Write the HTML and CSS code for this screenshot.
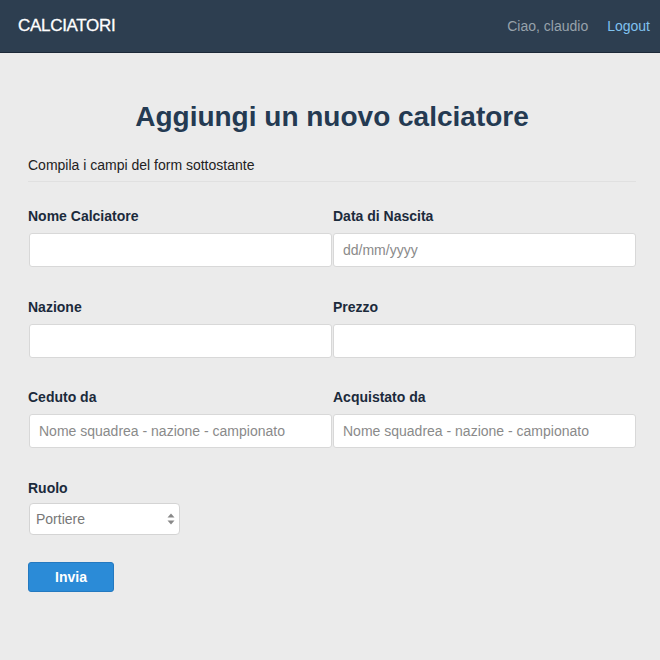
FILE: index.html
```html
<!DOCTYPE html>
<html lang="it">
<head>
<meta charset="utf-8">
<title>Calciatori</title>
<link rel="stylesheet" href="styles.css">
</head>
<body>
<nav class="navbar">
  <a class="brand" href="#">CALCIATORI</a>
  <div class="nav-right">
    <span class="greet">Ciao, claudio</span>
    <a class="logout" href="#">Logout</a>
  </div>
</nav>
<main class="container">
  <h1 class="title">Aggiungi un nuovo calciatore</h1>
  <p class="subtitle">Compila i campi del form sottostante</p>
  <form class="form">
    <div class="grid">
      <div class="field">
        <label>Nome Calciatore</label>
        <input type="text" class="input">
      </div>
      <div class="field">
        <label>Data di Nascita</label>
        <input type="text" class="input" placeholder="dd/mm/yyyy">
      </div>
      <div class="field">
        <label>Nazione</label>
        <input type="text" class="input">
      </div>
      <div class="field">
        <label>Prezzo</label>
        <input type="text" class="input">
      </div>
      <div class="field">
        <label>Ceduto da</label>
        <input type="text" class="input" placeholder="Nome squadrea - nazione - campionato">
      </div>
      <div class="field">
        <label>Acquistato da</label>
        <input type="text" class="input" placeholder="Nome squadrea - nazione - campionato">
      </div>
      <div class="field">
        <label>Ruolo</label>
        <div class="select-wrap">
          <select class="select">
            <option>Portiere</option>
          </select>
          <svg class="arrows" width="8" height="12" viewBox="0 0 8 12"><path d="M4 0.5 L7.5 4.5 L0.5 4.5 Z M4 11.5 L7.5 7.5 L0.5 7.5 Z" fill="#888"/></svg>
        </div>
      </div>
    </div>
    <button type="button" class="btn">Invia</button>
  </form>
</main>
</body>
</html>
```
FILE: styles.css
```css
html, body {
  margin: 0;
  padding: 0;
}
body {
  background: #ebebeb;
  font-family: "Liberation Sans", Arial, Helvetica, sans-serif;
  font-size: 14px;
  color: #333;
  min-height: 660px;
}
.navbar {
  height: 52px;
  background: #2d3e50;
  border-bottom: 1px solid #1c2938;
  display: flex;
  align-items: center;
  justify-content: space-between;
  padding: 0 10px 0 18px;
}
.brand {
  color: #fff;
  font-size: 17px;
  text-decoration: none;
  letter-spacing: -0.3px;
  -webkit-text-stroke: 0.3px #fff;
}
.nav-right {
  display: flex;
  gap: 19px;
  font-size: 14px;
}
.greet {
  color: #97a2ab;
}
.logout {
  color: #80c2ef;
  text-decoration: none;
}
.container {
  margin: 0 24px 0 28px;
  padding-top: 47px;
}
.title {
  margin: 0;
  text-align: center;
  font-size: 28px;
  line-height: 34px;
  font-weight: bold;
  color: #243a52;
}
.subtitle {
  margin: 21px 0 0;
  line-height: 20px;
  padding-bottom: 6px;
  border-bottom: 1px solid #e0e0e0;
  color: #222;
}
.form {
  padding-top: 24px;
}
.grid {
  display: grid;
  grid-template-columns: 1fr 1fr;
  row-gap: 29.5px;
}
.field {
  display: flex;
  flex-direction: column;
}
.field label {
  font-weight: bold;
  color: #1b2a3b;
  line-height: 20px;
  margin-bottom: 7px;
}
.field:nth-child(2n) label {
  padding-left: 1px;
}
.input {
  box-sizing: border-box;
  margin-left: 1px;
  width: 303px;
  height: 34px;
  border: 1px solid #d8d8d8;
  border-radius: 3px;
  background: #fff;
  padding: 0 9px;
  font-family: inherit;
  font-size: 14px;
  color: #333;
  outline: none;
}
.input::placeholder {
  color: #8a8a8a;
}
.select-wrap {
  position: relative;
  width: 151px;
  margin-left: 1px;
  margin-top: -2px;
}
.select {
  box-sizing: border-box;
  width: 151px;
  height: 32px;
  border: 1px solid #d4d4d4;
  border-radius: 4px;
  background: #fff;
  padding: 0 6px;
  font-family: inherit;
  font-size: 14px;
  color: #777;
  appearance: none;
  -webkit-appearance: none;
  outline: none;
}
.arrows {
  position: absolute;
  right: 5px;
  top: 10px;
}
.btn {
  margin-top: 27px;
  width: 86px;
  height: 30px;
  background: #2b8bd7;
  border: 1px solid #2479c0;
  border-radius: 3px;
  color: #fff;
  font-family: inherit;
  font-size: 14px;
  font-weight: bold;
  padding: 0;
}
```
